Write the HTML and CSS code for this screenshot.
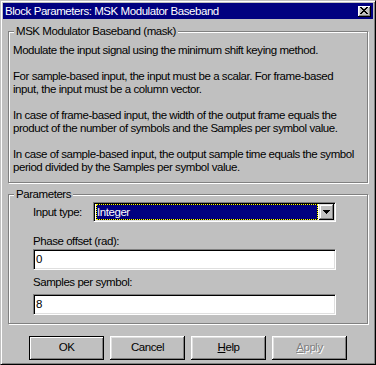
FILE: index.html
```html
<!DOCTYPE html>
<html>
<head>
<meta charset="utf-8">
<link rel="stylesheet" href="styles.css">
</head>
<body>
<div class="window">
  <div class="titlebar">
    <span class="title">Block Parameters: MSK Modulator Baseband</span>
    <span class="close"><svg class="close-x" width="8" height="7" viewBox="0 0 8 7" shape-rendering="crispEdges"><path d="M0 0h2v1h1v1h2v-1h1v-1h2v1h-1v1h-1v1h-1v1h1v1h1v1h1v1h-2v-1h-1v-1h-2v1h-1v1h-2v-1h1v-1h1v-1h1v-1h-1v-1h-1v-1h-1z" fill="#000"/></svg></span>
  </div>

  <fieldset class="group desc">
    <legend>MSK Modulator Baseband (mask)</legend>
    <p>Modulate the input signal using the minimum shift keying method.</p>
    <p>For sample-based input, the input must be a scalar. For frame-based<br>input, the input must be a column vector.</p>
    <p>In case of frame-based input, the width of the output frame equals the<br>product of the number of symbols and the Samples per symbol value.</p>
    <p>In case of sample-based input, the output sample time equals the symbol<br>period divided by the Samples per symbol value.</p>
  </fieldset>

  <fieldset class="group params">
    <legend>Parameters</legend>
    <div class="fields">
      <div class="row">
        <span class="row-label">Input type:</span>
        <div class="combo">
          <span class="value">Integer</span>
          <span class="drop"><svg width="7" height="4" viewBox="0 0 7 4" shape-rendering="crispEdges"><path d="M0 0h7v1h-1v1h-1v1h-1v1h-1v-1h-1v-1h-1v-1h-1z" fill="#000"/></svg></span>
        </div>
      </div>
      <div class="label label-phase">Phase offset (rad):</div>
      <div class="edit edit-phase">0</div>
      <div class="label label-sps">Samples per symbol:</div>
      <div class="edit edit-sps">8</div>
    </div>
  </fieldset>

  <div class="buttons">
    <div class="btn default">OK</div>
    <div class="btn">Cancel</div>
    <div class="btn"><span><u>H</u>elp</span></div>
    <div class="btn disabled"><span><u>A</u>pply</span></div>
  </div>
</div>
</body>
</html>
```

FILE: styles.css
```css
* {
  box-sizing: border-box;
}

body {
  margin: 0;
  background: #c0c0c0;
  font-family: "Liberation Sans", Arial, sans-serif;
  font-size: 11.5px;
  letter-spacing: -0.44px;
  color: #000;
}

.window {
  width: 376px;
  height: 365px;
  border: 1px solid;
  border-color: #c0c0c0 #000 #000 #c0c0c0;
  box-shadow: inset 1px 1px #fff, inset -1px -1px #808080;
  padding: 2px;
  background: #c0c0c0;
  display: flex;
  flex-direction: column;
}

.titlebar {
  height: 16px;
  flex: none;
  background: #000080;
  color: #fff;
  display: flex;
  align-items: center;
  padding: 0 2px;
  line-height: 16px;
}

.title {
  flex: 1;
  white-space: nowrap;
}

.close {
  width: 13px;
  height: 11px;
  background: #c0c0c0;
  box-shadow: inset -1px -1px #000, inset 1px 1px #fff, inset -2px -2px #808080, inset 2px 2px #dfdfdf;
  display: flex;
  align-items: center;
  justify-content: center;
  padding: 0 1px 1px 0;
}

.close-x {
  display: block;
}

.group {
  margin: 6px 5px 0;
  border: 1px solid #808080;
  box-shadow: inset 1px 1px #fff, 1px 1px #fff;
  padding: 6px 4px 8px;
  min-width: 0;
  flex: none;
}

.group legend {
  padding: 0 2px;
  margin-left: 1px;
  background: #c0c0c0;
  line-height: 13px;
}

.desc p {
  margin: 0 0 13px;
  line-height: 13px;
  white-space: nowrap;
}

.desc p:last-child {
  margin-bottom: 0;
}

.params {
  margin-top: 5px;
  padding: 1px 4px 8px;
}

.fields {
  margin-left: 20px;
  width: 303px;
}

.row {
  display: flex;
  height: 20px;
  align-items: center;
}

.row-label {
  width: 60px;
  flex: none;
  white-space: nowrap;
}

.combo {
  flex: 1;
  height: 20px;
  border: 1px solid;
  border-color: #808080 #fff #fff #808080;
  box-shadow: inset 1px 1px #000, inset -1px -1px #dfdfdf;
  padding: 1px;
  background: #fff;
  display: flex;
}

.value {
  flex: 1;
  margin: 0 1px;
  border: 1px dotted #ffff00;
  background: linear-gradient(#000080, #000080) padding-box, #000;
  color: #fff;
  line-height: 14px;
  padding-left: 0;
  white-space: nowrap;
}

.drop {
  width: 15px;
  height: 16px;
  flex: none;
  background: #c0c0c0;
  box-shadow: inset -1px -1px #000, inset 1px 1px #dfdfdf, inset -2px -2px #808080, inset 2px 2px #fff;
  display: flex;
  align-items: center;
  justify-content: center;
}

.drop svg {
  display: block;
}

.label {
  line-height: 13px;
  white-space: nowrap;
}

.label-phase {
  margin-top: 13px;
}

.label-sps {
  margin-top: 6px;
}

.edit {
  height: 21px;
  border: 1px solid;
  border-color: #808080 #fff #fff #808080;
  box-shadow: inset 1px 1px #000, inset -1px -1px #dfdfdf;
  background: #fff;
  padding: 2px 2px 1px;
  line-height: 15px;
}

.edit-phase {
  margin-top: 1px;
}

.edit-sps {
  margin-top: 5px;
}

.buttons {
  display: flex;
  justify-content: center;
  gap: 6px;
  margin-top: 12px;
}

.btn {
  width: 75px;
  height: 24px;
  background: #c0c0c0;
  box-shadow: inset -1px -1px #000, inset 1px 1px #fff, inset -2px -2px #808080, inset 2px 2px #dfdfdf;
  display: flex;
  align-items: center;
  justify-content: center;
  line-height: 13px;
  padding-bottom: 1px;
}

.btn.default {
  border: 1px solid #000;
  box-shadow: inset 1px 1px #fff, inset -1px -1px #808080;
}

.btn.disabled {
  color: #808080;
  text-shadow: 1px 1px #fff;
}

.btn u {
  text-decoration-thickness: 1px;
  text-underline-offset: 1px;
}
```
